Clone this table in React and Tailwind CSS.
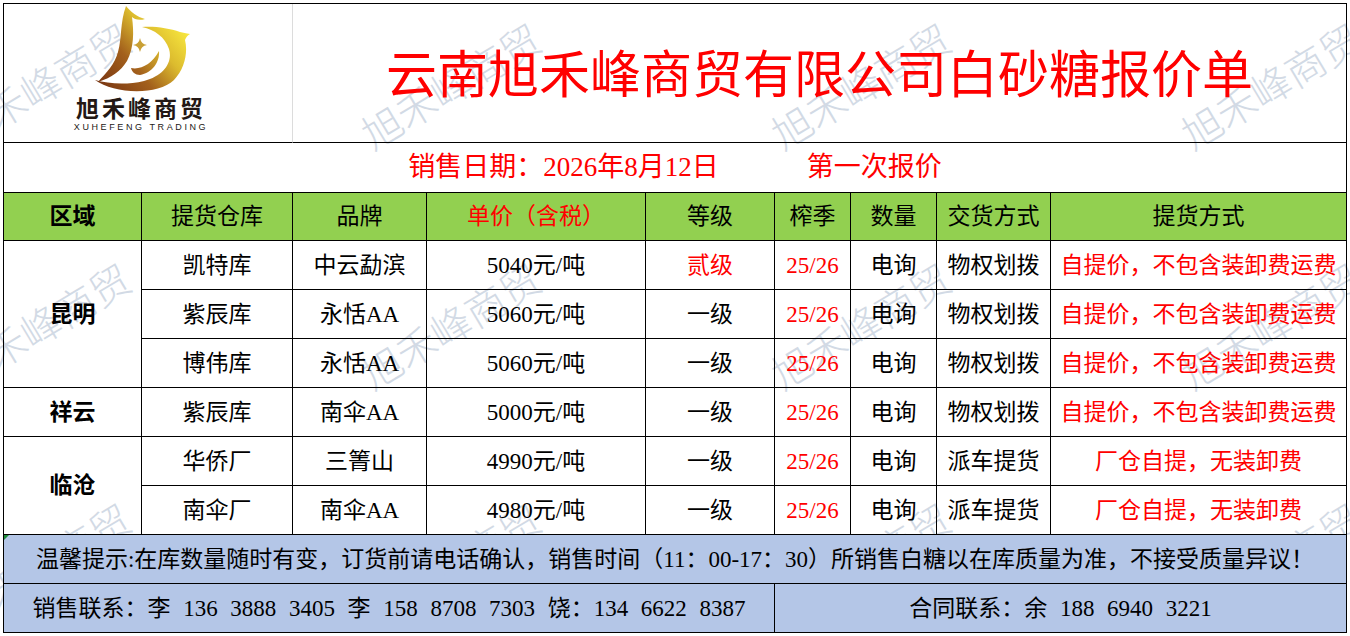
import React from 'react';

// 报价单数据
const rows = [
  { wh: '凯特库', brand: '中云勐滨', price: '5040元/吨', grade: '贰级', deliver: '物权划拨', pick: '自提价，不包含装卸费运费' },
  { wh: '紫辰库', brand: '永恬AA', price: '5060元/吨', grade: '一级', deliver: '物权划拨', pick: '自提价，不包含装卸费运费' },
  { wh: '博伟库', brand: '永恬AA', price: '5060元/吨', grade: '一级', deliver: '物权划拨', pick: '自提价，不包含装卸费运费' },
  { wh: '紫辰库', brand: '南伞AA', price: '5000元/吨', grade: '一级', deliver: '物权划拨', pick: '自提价，不包含装卸费运费' },
  { wh: '华侨厂', brand: '三箐山', price: '4990元/吨', grade: '一级', deliver: '派车提货', pick: '厂仓自提，无装卸费' },
  { wh: '南伞厂', brand: '南伞AA', price: '4980元/吨', grade: '一级', deliver: '派车提货', pick: '厂仓自提，无装卸费' },
];

const regions = {
  0: { name: '昆明', span: 'row-span-3' },
  3: { name: '祥云', span: 'row-span-1' },
  4: { name: '临沧', span: 'row-span-2' },
};

// watermark centres, written out in full
const marks = [
  'left-[40px] top-[85px]', 'left-[450px] top-[85px]', 'left-[860px] top-[85px]', 'left-[1270px] top-[85px]',
  'left-[40px] top-[325px]', 'left-[450px] top-[325px]', 'left-[860px] top-[325px]', 'left-[1270px] top-[325px]',
  'left-[40px] top-[565px]', 'left-[450px] top-[565px]', 'left-[860px] top-[565px]', 'left-[1270px] top-[565px]',
];

export default function App() {
  return (
    <div className="relative w-[1350px] h-[636px] bg-white overflow-hidden font-[family-name:Liberation_Serif,Noto_Sans_CJK_SC,serif] text-black">
      {/* 水印 */}
      <div className="absolute inset-0 pointer-events-none">
        {marks.map((m, i) => (
          <span key={i}
                className={`absolute ${m} -translate-x-1/2 -translate-y-1/2 -rotate-[31deg] whitespace-nowrap text-[40px] leading-none text-[#d2dae5] font-[family-name:Noto_Sans_CJK_SC,sans-serif] font-light`}>
            旭禾峰商贸
          </span>
        ))}
      </div>

      <div className="relative ml-[3px] mt-[3px] w-[1344px] grid grid-cols-[138px_151px_134px_219px_129px_76px_86px_114px_296px] grid-rows-[139px_50px_48px_49px_49px_49px_49px_49px_49px_49px_49px] border-t border-l border-black">
        {/* 标题行 */}
        <div className="col-span-2 border-r border-r-[#dcdcdc] border-b border-black">
          <Logo />
        </div>
        <div className="col-span-7 flex items-center justify-center pt-[6px] border-r border-b border-black text-[51px] leading-none text-[#ff0000] whitespace-nowrap">
          云南旭禾峰商贸有限公司白砂糖报价单
        </div>

        {/* 日期行 */}
        <div className="col-span-9 flex items-center justify-center gap-[88px] border-r border-b border-black text-[27px] leading-none text-[#ff0000] whitespace-nowrap">
          <span>销售日期：2026年8月12日</span>
          <span>第一次报价</span>
        </div>

        {/* 表头 */}
        <Head bold>区域</Head>
        <Head>提货仓库</Head>
        <Head>品牌</Head>
        <Head red>单价（含税）</Head>
        <Head>等级</Head>
        <Head>榨季</Head>
        <Head>数量</Head>
        <Head>交货方式</Head>
        <Head>提货方式</Head>

        {rows.map((r, i) => (
          <React.Fragment key={i}>
            {regions[i] && (
              <Cell className={`${regions[i].span} font-bold`}>{regions[i].name}</Cell>
            )}
            <Cell>{r.wh}</Cell>
            <Cell>{r.brand}</Cell>
            <Cell>{r.price}</Cell>
            <Cell className={r.grade === '贰级' ? 'text-[#ff0000]' : ''}>{r.grade}</Cell>
            <Cell className="text-[#ff0000]">25/26</Cell>
            <Cell>电询</Cell>
            <Cell>{r.deliver}</Cell>
            <Cell className="text-[#ff0000]">{r.pick}</Cell>
          </React.Fragment>
        ))}

        {/* 提示 */}
        <div className="relative col-span-9 flex items-center justify-center bg-[#b4c6e7] border-r border-b border-black text-[23px] leading-none whitespace-nowrap">
          <span className="absolute left-0 top-0 w-0 h-0 border-t-[5px] border-r-[5px] border-t-[#1e8c3a] border-r-transparent" />
          温馨提示:在库数量随时有变，订货前请电话确认，销售时间（11：00-17：30）所销售白糖以在库质量为准，不接受质量异议！
        </div>

        {/* 联系 */}
        <div className="col-span-5 flex items-center justify-center bg-[#b4c6e7] border-r border-b border-black text-[23px] leading-none whitespace-pre [word-spacing:0.3em]">
          销售联系：李 136 3888 3405 李 158 8708 7303 饶：134 6622 8387
        </div>
        <div className="col-span-4 flex items-center justify-center bg-[#b4c6e7] border-r border-b border-black text-[23px] leading-none whitespace-pre [word-spacing:0.3em]">
          合同联系：余 188 6940 3221
        </div>
      </div>
    </div>
  );
}

function Head({ children, bold, red }) {
  return (
    <div className={`flex items-center justify-center bg-[#92d050] border-r border-b border-black text-[23px] leading-none whitespace-nowrap ${bold ? 'font-bold' : ''} ${red ? 'text-[#ff0000]' : ''}`}>
      {children}
    </div>
  );
}

function Cell({ children, className = '' }) {
  return (
    <div className={`flex items-center justify-center border-r border-b border-black text-[23px] leading-none whitespace-nowrap ${className}`}>
      {children}
    </div>
  );
}

function Logo() {
  return (
    <div className="ml-[72px] w-[130px] flex flex-col items-center">
      <svg width="105" height="90" viewBox="90 2 105 90">
        <defs>
          <linearGradient id="gold" gradientUnits="userSpaceOnUse" x1="104" y1="86" x2="180" y2="22">
            <stop offset="0" stopColor="#7a3712" />
            <stop offset="0.38" stopColor="#a3601c" />
            <stop offset="0.7" stopColor="#dcbb2e" />
            <stop offset="1" stopColor="#f7e63e" />
          </linearGradient>
        </defs>
        {/* left flame */}
        <path fill="url(#gold)"
              d="M127,4 C132,10 138,15 146,17 C140,19 135,17 133,15 C135,30 135,46 128,59 C122,69 112,76 99,80 C107,71 116,62 119,50 C123,36 121,20 127,4 Z" />
        {/* bowl + right horn */}
        <path fill="url(#gold)"
              d="M96,78 C115,92 158,94 175,78 C186,67 189,50 186,38 C187,35 189,33 191,32 C187,31 184,31 181,30 C170,26 155,24 143,25 C156,28 166,35 170,47 C174,60 165,74 145,79 C128,83 110,82 96,78 Z" />
        {/* inner crescent */}
        <path fill="url(#gold)"
              d="M132,66 C142,68 153,62 160,49 C161,60 153,71 141,73 C136,73 133,70 132,66 Z" />
        {/* star */}
        <path fill="#c9a035"
              d="M141,36 Q142,42 148,43 Q142,44 141,50 Q140,44 134,43 Q140,42 141,36 Z" />
      </svg>
      <div className="mt-[2px] text-[23px] leading-none font-bold tracking-[3px] text-[#231815] font-[family-name:Noto_Sans_CJK_SC,sans-serif] whitespace-nowrap">
        旭禾峰商贸
      </div>
      <div className="mt-[4px] text-[9px] leading-none tracking-[2.6px] text-[#231815] font-[family-name:Liberation_Sans,sans-serif] whitespace-nowrap">
        XUHEFENG TRADING
      </div>
    </div>
  );
}
